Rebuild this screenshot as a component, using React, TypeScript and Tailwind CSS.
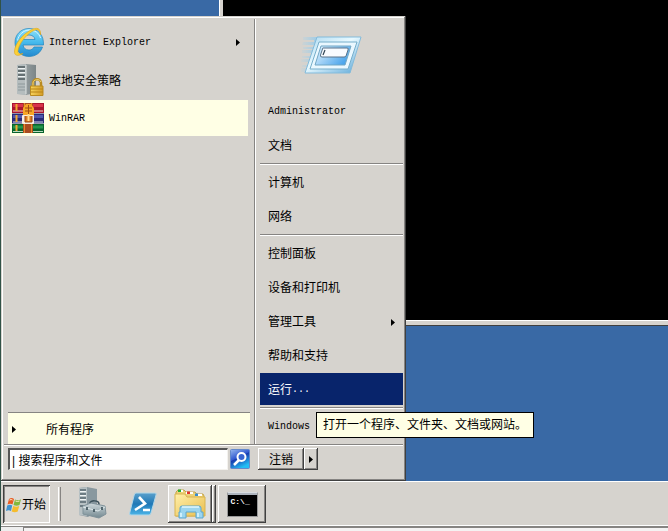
import type { ReactNode } from 'react';

const raised =
  'shadow-[inset_-1px_-1px_#404040,inset_1px_1px_#ffffff,inset_-2px_-2px_#868482]';
const cjk = "font-['Liberation_Sans','Noto_Sans_CJK_SC',sans-serif] text-[12px] leading-[16px]";
const mono = "font-['Liberation_Mono','Noto_Sans_CJK_SC',monospace] text-[10px] leading-[16px]";

function Arrow() {
  return (
    <svg className="h-[7px] w-1 shrink-0" viewBox="0 0 4 7" aria-hidden="true">
      <path d="M0 0L4 3.5L0 7Z" fill="currentColor" />
    </svg>
  );
}

function ExplorerLogo() {
  return (
    <svg className="size-8 shrink-0" viewBox="0 0 32 32" aria-hidden="true">
      <defs>
        <linearGradient id="ie" x1="0" y1="0" x2="0" y2="1">
          <stop offset="0" stopColor="#8fe0fb" />
          <stop offset=".5" stopColor="#45b9ec" />
          <stop offset="1" stopColor="#2389cf" />
        </linearGradient>
      </defs>
      <path
        fillRule="evenodd"
        d="M17 2.500C9 2.500 3 8.500 3 16.500S9 30.500 17 30.500c6.500 0 11.500-3.500 13.500-9.500h-8.500c-1 2-2.500 3-5 3-3.500 0-5.500-2-6-5h20.500C32 9 26 2.500 17 2.500ZM11 13.500C11.500 10.500 14 9 17 9s5.500 1.500 6 4.500Z"
        fill="url(#ie)"
        stroke="#1f83bd"
        strokeWidth=".7"
      />
      <path d="M5.500 14.500C7 8.500 11 4.500 17 4c6 0 10 3 11.500 8" fill="none" stroke="#d6f6ff" strokeWidth="1" />
      <path
        d="M28.500 9C29 2 25 .5 18 4.500 10 9 3 18 2.500 25c-.5 5 3.500 5.500 8.500 2.500-4 1-5.500 0-5-3C7 18 13 10 20 5.500c4.500-3 8-2.500 8.500 3.500Z"
        fill="#fbd136"
        stroke="#dfa51a"
        strokeWidth=".6"
      />
    </svg>
  );
}

function SecurityIcon() {
  return (
    <svg className="size-8 shrink-0" viewBox="0 0 32 32" aria-hidden="true">
      <defs>
        <linearGradient id="tower">
          <stop offset="0" stopColor="#c3c9ca" />
          <stop offset=".5" stopColor="#919a9c" />
          <stop offset="1" stopColor="#7b8587" />
        </linearGradient>
        <linearGradient id="lock">
          <stop offset="0" stopColor="#f7d35b" />
          <stop offset="1" stopColor="#d39b25" />
        </linearGradient>
      </defs>
      <path d="M5 1l9-1 10 1v28l-10 2-9-1Z" fill="url(#tower)" />
      <path d="M5 1l9-1v31l-9-1Z" fill="#b5bdbe" />
      <path d="M6 3h7M6 7h7M6 11h7M6 15h7" stroke="#4b575b" strokeWidth="1.500" />
      <path d="M6 4.500h7M6 8.500h7M6 12.500h7" stroke="#eef2f2" />
      <path d="M6 20h7M6 23h7M6 26h7" stroke="#8e999b" />
      <path d="M14 1v29" stroke="#dbe0e0" />
      <path d="M21 23v-4c0-5 8-5 8 0v4" fill="none" stroke="#b98a20" strokeWidth="2.500" />
      <path d="M21 22v-3c0-4 7-4.500 8-1" fill="none" stroke="#f0d77c" />
      <path d="M18.500 22h12.500v9.500h-12.500Z" fill="url(#lock)" stroke="#b98a20" />
      <path d="M19 25h12M19 28h12" stroke="#b98416" />
    </svg>
  );
}

function RarIcon() {
  return (
    <svg className="size-8 shrink-0" viewBox="0 0 32 32" aria-hidden="true">
      <rect x="0" y="1" width="32" height="10" fill="#a9162e" />
      <path d="M1 3.500h30" stroke="#d93449" strokeWidth="3" />
      <path d="M1 9h30" stroke="#f0d4ca" />
      <rect x="0" y="11.500" width="32" height="10" fill="#292a78" />
      <path d="M1 14.500h30" stroke="#4f56ac" strokeWidth="3" />
      <path d="M1 20h30" stroke="#d5dae9" />
      <rect x="0" y="22" width="32" height="9" fill="#08642c" />
      <path d="M1 25h30" stroke="#25954a" strokeWidth="3" />
      <path d="M1 29.500h30" stroke="#b7d9bc" />
      <path d="M4.500 2v7M4.500 13v7M4.500 23v6" stroke="#f3a92f" strokeWidth="2" />
      <rect x="11" y="1" width="10" height="30" fill="#a94b20" />
      <path d="M12.500 1v30M19.500 1v30" stroke="#e48c2b" />
      <path d="M11 6l3-4h5l3 4v9H11Z" fill="#f7a624" />
      <path d="M13 6h7M13 9h7M16.500 3v10" stroke="#9e4d12" />
      <rect x="10" y="13" width="12" height="9" rx="1" fill="#f8eee3" />
      <path d="M13 14v6h7v-6" fill="#dd7c22" stroke="#924416" />
      <path d="M16.500 12v7" stroke="#ffdc8d" strokeWidth="2" />
    </svg>
  );
}

function RunIcon() {
  return (
    <svg className="h-10 w-[62px]" viewBox="0 0 62 40" aria-hidden="true">
      <defs>
        <linearGradient id="run" x1="0" x2="1" y2="1">
          <stop offset="0" stopColor="#acd8ef" />
          <stop offset=".45" stopColor="#e8f9ff" />
          <stop offset="1" stopColor="#58a5d7" />
        </linearGradient>
        <linearGradient id="panel" x1="0" x2="1" y2=".5">
          <stop offset="0" stopColor="#eef9ff" />
          <stop offset="1" stopColor="#4ba5ec" />
        </linearGradient>
        <linearGradient id="speed">
          <stop offset="0" stopColor="#a9d2e8" stopOpacity=".15" />
          <stop offset="1" stopColor="#9bcbe8" />
        </linearGradient>
      </defs>
      <path d="M2 2h15l-3 8H1l1-3h11V5H2ZM2 12h12l-2 6H1v-3h11v-1H2ZM1 21h11l-2 6H0v-3h10v-1H1ZM1 30h9l-3 7H0v-4h7v-1H1Z" fill="url(#speed)" />
      <path d="M16 2h44L49 38H4Z" fill="url(#run)" stroke="#83bbdb" />
      <path d="M18 7h38l-9 27H9Z" fill="#eaf8ff" stroke="#77aeca" />
      <path d="M20 11h30l-6 19H14Z" fill="url(#panel)" stroke="#73a7c4" />
      <path d="M22 13h24q2 0 1 2l-2 6q-.5 1-2 1H21q-2 0-1.500-2l2-6q0-1 .5-1Z" fill="#f8fbff" stroke="#58738a" />
      <path d="M24 15l-2 5" stroke="#304454" strokeWidth="1.200" />
    </svg>
  );
}

function SearchIcon() {
  return (
    <svg className="size-5" viewBox="0 0 20 20" aria-hidden="true">
      <defs>
        <linearGradient id="search" x1="0" y1="0" x2=".5" y2="1">
          <stop offset="0" stopColor="#97b8ef" />
          <stop offset=".48" stopColor="#3159d0" />
          <stop offset=".52" stopColor="#173baf" />
          <stop offset="1" stopColor="#22bdf4" />
        </linearGradient>
      </defs>
      <rect x=".5" y=".5" width="19" height="19" rx="1" fill="url(#search)" stroke="#6489cb" />
      <circle cx="11.500" cy="8" r="4" fill="#3865d1" stroke="#fff" strokeWidth="2" />
      <path d="M9 11l-5 5" stroke="#fff" strokeWidth="2.500" />
    </svg>
  );
}

function WindowsLogo() {
  return (
    <svg className="size-4 shrink-0" viewBox="0 0 16 16" aria-hidden="true">
      <path d="M3 2C5 .7 6.500.9 8 2L6.500 7.500C5 6.500 3.500 6.500 1.500 7.500Z" fill="#e75b22" />
      <path d="M9 2.500c2 1 4 1 6-.2L13.500 8c-2 1-4 1-6 0Z" fill="#81b83b" />
      <path d="M1.200 8.500c2-1 3.600-1 5 0L5 14c-1.500-1-3-1-5 0Z" fill="#3f92cf" />
      <path d="M7.200 9c2 1 4 1 6 0l-1.500 5.500c-2 1-4 1-6 0Z" fill="#f5bc2d" />
      <path d="M3.500 3q2-1 3 0M9.500 4q2 1 4 0" fill="none" stroke="#ffe7c6" />
    </svg>
  );
}

function ServerManagerIcon() {
  return (
    <svg className="h-8 w-[30px]" viewBox="0 0 30 32" aria-hidden="true">
      <defs>
        <linearGradient id="bag" x1="0" x2="0" y1="0" y2="1">
          <stop offset="0" stopColor="#cfd9dc" />
          <stop offset="1" stopColor="#738890" />
        </linearGradient>
      </defs>
      <path d="M2 1l8-1 10 2v22l-9 6-9-2Z" fill="#89989f" />
      <path d="M2 1l8-1v29l-8-1Z" fill="#b7c1c4" />
      <path d="M3 3h6M3 7h6M3 11h6M3 15h6M3 19h6" stroke="#56666e" strokeWidth="1.500" />
      <path d="M3 4.500h6M3 8.500h6M3 12.500h6" stroke="#f1f5f5" />
      <path d="M13 18v-2c0-3 9-3 9 1v2" fill="none" stroke="#394e58" strokeWidth="1.500" />
      <path d="M6 19l8-3 14 3 1 8-7 4-16-4Z" fill="url(#bag)" stroke="#7f9199" />
      <path d="M6 20l15 4 7-4" fill="none" stroke="#dee9eb" />
      <path d="M10 20v3M17 22v3M25 20v3" stroke="#31454f" strokeWidth="1.500" />
    </svg>
  );
}

function PowerShellIcon() {
  return (
    <svg className="h-6 w-7" viewBox="0 0 28 24" aria-hidden="true">
      <defs>
        <linearGradient id="ps" x1="0" y1="0" x2="0" y2="1">
          <stop offset="0" stopColor="#5aa0cc" />
          <stop offset=".5" stopColor="#1f78b6" />
          <stop offset="1" stopColor="#4bb4e8" />
        </linearGradient>
      </defs>
      <path d="M7 1h19q2 0 1 2l-5 18q-.5 2-2 2H2Q0 23 .7 21l4.500-18Q5.700 1 7 1Z" fill="url(#ps)" stroke="#b2d6e7" />
      <path d="M10 5l6 6.500-10 6.500M14 18h7" fill="none" stroke="#fff" strokeWidth="2.600" />
    </svg>
  );
}

function FolderIcon() {
  return (
    <svg className="size-8" viewBox="0 0 32 32" aria-hidden="true">
      <defs>
        <linearGradient id="folder" x1="0" y1="0" x2="1" y2="1">
          <stop offset="0" stopColor="#fff0ab" />
          <stop offset="1" stopColor="#e9bd4e" />
        </linearGradient>
      </defs>
      <path d="M2 4l2-2h6l2 2h9l2 2h6l1 2v20H2Z" fill="#ecd178" stroke="#c5a44c" />
      <path d="M4 3h5M12 5h7M21 7h7" stroke="#fff" strokeWidth="2" />
      <rect x="4" y="1.500" width="3" height="2.500" fill="#24af35" />
      <rect x="13" y="3.500" width="3" height="2.500" fill="#df372e" />
      <rect x="21" y="5.500" width="3" height="2.500" fill="#378cd0" />
      <path d="M1 6h10l2 3h18v19H1Z" fill="url(#folder)" stroke="#d8b450" />
      <path d="M6 20q0-2 2-2h17q2 0 2 2v4h2v6h-7v-6H12v6H5v-6h1Z" fill="#9bd5ef" stroke="#5aa6cf" />
      <path d="M8 19h17M7 25v4M24 25v4" stroke="#e1f8ff" strokeWidth="1.500" />
    </svg>
  );
}

function ConsoleIcon() {
  return (
    <span className="block h-[25px] w-[31px] border border-[#999] border-t-[#d8dce0] bg-black">
      <span className="block h-[2px] bg-[#aeb4bd]" />
      <span className="block pl-[3px] text-left font-['Liberation_Mono',monospace] text-[8px] font-bold leading-[14px] text-white">
        C:\_
      </span>
    </span>
  );
}

function Program({
  icon,
  label,
  selected,
  submenu,
  latin,
}: {
  icon: ReactNode;
  label: string;
  selected?: boolean;
  submenu?: boolean;
  latin?: boolean;
}) {
  return (
    <button
      className={`flex h-9 w-full items-center gap-[5px] pr-2 pl-0.5 text-left ${selected ? 'bg-[#ffffe5]' : ''}`}
    >
      {icon}
      <span className={`flex-1 pt-0.5 ${latin ? mono : cjk}`}>{label}</span>
      {submenu && <Arrow />}
    </button>
  );
}

function Place({ label, submenu, latin }: { label: string; submenu?: boolean; latin?: boolean }) {
  return (
    <button
      className={`flex h-[34px] w-full items-center justify-between pt-0.5 pr-2 pl-2 text-left ${latin ? mono : cjk}`}
    >
      {label}
      {submenu && <Arrow />}
    </button>
  );
}

function Divider() {
  return <hr className="my-0 mt-px h-0.5 border-0 border-t border-b border-t-[#868482] border-b-white" />;
}

function StartMenu() {
  return (
    <nav
      aria-label="开始菜单"
      className="absolute bottom-0 left-0 w-[405px] bg-[#d6d3ce] p-[3px] shadow-[inset_-1px_-1px_#404040,inset_1px_1px_#d6d3ce,inset_-2px_-2px_#868482,inset_2px_2px_#ffffff]"
    >
      <div className="flex">
        <div className="flex w-[250px] flex-col pt-[5px]">
          <div className="flex flex-col gap-0.5 px-1.5">
            <Program icon={<ExplorerLogo />} label="Internet Explorer" submenu latin />
            <Program icon={<SecurityIcon />} label="本地安全策略" />
            <Program icon={<RarIcon />} label="WinRAR" selected latin />
          </div>
          <button
            className={`mt-auto mr-1 ml-1 flex h-8 items-center gap-[30px] border-t border-[#868482] bg-[#ffffe5] pt-0.5 pl-1 text-left ${cjk}`}
          >
            <Arrow />
            所有程序
          </button>
        </div>
        <div className="min-w-0 flex-1 border-l border-[#868482] shadow-[inset_1px_0_#ffffff]">
          <div className="pb-px pl-[5px]">
            <div className="flex h-[75px] items-start justify-center pt-4">
              <RunIcon />
            </div>
            <Place label="Administrator" latin />
            <Place label="文档" />
            <Divider />
            <Place label="计算机" />
            <Place label="网络" />
            <Divider />
            <Place label="控制面板" />
            <Place label="设备和打印机" />
            <Place label="管理工具" submenu />
            <Place label="帮助和支持" />
            <div className="relative py-px">
              <button
                aria-describedby="run-tip"
                className={`flex h-8 w-full items-center bg-[#08246b] pt-0.5 pl-2 text-left text-white ${cjk}`}
              >
                运行<span className={mono}>...</span>
              </button>
              <div
                id="run-tip"
                role="tooltip"
                className={`absolute top-10 left-14 z-10 border border-black bg-[#ffffe5] px-1.5 py-1 whitespace-nowrap ${cjk}`}
              >
                打开一个程序、文件夹、文档或网站。
              </div>
            </div>
            <Divider />
            <Place label="Windows" latin />
          </div>
        </div>
      </div>
      <div className="flex h-[34px] items-start border-t border-[#868482] pt-[3px] pl-1 shadow-[inset_0_1px_#ffffff]">
        <input
          type="text"
          aria-label="搜索程序和文件"
          defaultValue="| 搜索程序和文件"
          className={`h-[22px] w-[220px] rounded-none border border-t-2 border-l-2 border-[#f4f2ee] border-t-[#555] border-l-[#555] bg-white px-0.5 outline-none ${cjk}`}
        />
        <button aria-label="搜索" className="mt-px ml-0.5">
          <SearchIcon />
        </button>
        <button className={`ml-2 h-[22px] w-[46px] pt-0.5 ${raised} ${cjk}`}>注销</button>
        <button aria-label="更多选项" className={`flex h-[22px] w-[14px] items-center justify-center ${raised}`}>
          <Arrow />
        </button>
      </div>
    </nav>
  );
}

export default function App() {
  return (
    <div className="flex h-screen flex-col overflow-hidden border-l border-[#315247] bg-[#3969a5] text-black">
      <main className="relative min-h-0 flex-1">
        <section
          aria-label="命令提示符"
          className="absolute top-0 right-0 bottom-[155px] left-[218px] border-b border-l border-b-[#404040] border-l-[#d6d3ce] bg-black"
        >
          <div className="h-full border-b-4 border-l-[3px] border-[#d6d3ce] shadow-[-1px_0_#ffffff]">
            <div className="h-full border-b border-white" />
          </div>
        </section>
        <StartMenu />
      </main>
      <footer className="flex h-[46px] shrink-0 items-start border-t border-b border-t-white border-b-[#868482] bg-[#d6d3ce] pt-[3px] pl-0.5 shadow-[inset_0_-1px_#ffffff]">
        <button
          className={`flex h-[38px] w-[47px] items-center bg-[#dedbd7] pt-0.5 pl-[3px] shadow-[inset_1px_1px_#404040,inset_-1px_-1px_#ffffff,inset_2px_2px_#868482] ${cjk}`}
        >
          <WindowsLogo />
          <span className="whitespace-nowrap">开始</span>
        </button>
        <span className="mt-0.5 ml-2 h-[34px] w-[3px] border-r border-l border-r-[#868482] border-l-white" />
        <button aria-label="服务器管理器" className="mt-0.5 ml-4">
          <ServerManagerIcon />
        </button>
        <button aria-label="PowerShell" className="mt-[7px] ml-[22px]">
          <PowerShellIcon />
        </button>
        <div className="ml-[11px] flex">
          <button
            aria-label="资源管理器"
            className={`flex h-[38px] w-11 items-center justify-center bg-[#e2e0dc] ${raised}`}
          >
            <FolderIcon />
          </button>
          <span className={`h-[38px] w-1 ${raised}`} />
        </div>
        <button
          aria-label="命令提示符"
          className={`ml-0.5 flex h-[38px] w-12 items-center justify-center ${raised}`}
        >
          <ConsoleIcon />
        </button>
      </footer>
      <div className="h-1 shrink-0 bg-[#eeeeee] pl-[22px]">
        <div className="h-full border-t border-l border-[#868482] bg-[#f4f2f2]" />
      </div>
    </div>
  );
}
